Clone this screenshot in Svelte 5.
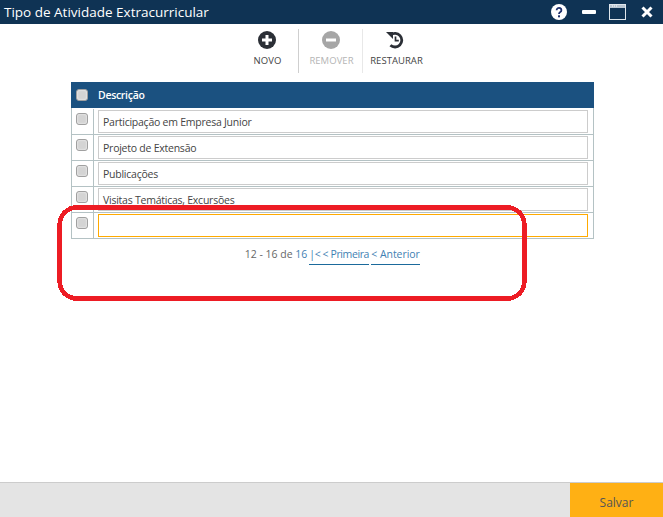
<script>
  const rows = [
    'Participação em Empresa Junior',
    'Projeto de Extensão',
    'Publicações',
    'Visitas Temáticas, Excursões',
    ''
  ];
</script>

<div class="window">
  <header class="titlebar">
    <span class="title">Tipo de Atividade Extracurricular</span>
    <div class="controls">
      <svg class="help" width="18" height="18" viewBox="0 0 18 18">
        <circle cx="9" cy="9" r="8" fill="#fff" />
        <path d="M6.6 7.2a2.4 2.3 0 1 1 3.7 1.9c-.9.6-1.3 1-1.3 2" fill="none" stroke="#1d2f6b" stroke-width="1.8" />
        <rect x="8" y="12.3" width="2" height="2" fill="#1d2f6b" />
      </svg>
      <svg class="min" width="14" height="18" viewBox="0 0 14 18"><rect x="0" y="7" width="14" height="4" rx="1" fill="#fff" /></svg>
      <svg class="max" width="17" height="16" viewBox="0 0 17 16">
        <rect x=".5" y=".5" width="16" height="15" fill="none" stroke="#dfe6ec" />
        <rect x="1" y="1" width="15" height="3" fill="#b9c6d2" />
        <path d="M3 2h1M5 2h1M7 2h1" stroke="#fff" />
      </svg>
      <svg class="close" width="12" height="18" viewBox="0 0 12 18"><path d="M1.5 4.5l9 9M10.5 4.5l-9 9" stroke="#fff" stroke-width="3" /></svg>
    </div>
  </header>

  <nav class="toolbar">
    <div class="tool">
      <svg width="18" height="18" viewBox="0 0 18 18">
        <circle cx="9" cy="9" r="9" fill="#2b2f36" />
        <path d="M9 4v10M4 9h10" stroke="#fff" stroke-width="3" />
      </svg>
      <span>NOVO</span>
    </div>
    <div class="tool disabled">
      <svg width="18" height="18" viewBox="0 0 18 18">
        <circle cx="9" cy="9" r="9" fill="#a6a6a6" />
        <path d="M4 9h10" stroke="#fff" stroke-width="3" />
      </svg>
      <span>REMOVER</span>
    </div>
    <div class="tool">
      <svg width="18" height="18" viewBox="0 0 18 18">
        <path d="M4.6 4A6.800 6.800 0 1 1 4.400 14.200" fill="none" stroke="#2b2f36" stroke-width="2.800" />
        <path d="M0 1h7v7z" fill="#2b2f36" />
        <path d="M9.500 5.500v4.200h3.300" fill="none" stroke="#2b2f36" stroke-width="1.700" />
      </svg>
      <span>RESTAURAR</span>
    </div>
  </nav>

  <main class="content">
    <div class="grid">
      <div class="grid-head">
        <div class="cell-check"><span class="box"></span></div>
        <div class="head-label">Descrição</div>
      </div>
      {#each rows as row, i}
        <div class="grid-row">
          <div class="cell-check"><span class="box"></span></div>
          <div class="cell-input">
            <div class="input" class:focus={i === rows.length - 1}>{row}</div>
          </div>
        </div>
      {/each}
    </div>

    <div class="pager">
      <span>12 - 16 de <b>16</b></span>
      <a href="#first">|&lt; &lt; Primeira</a>
      <a href="#prev">&lt; Anterior</a>
    </div>
  </main>

  <footer class="footer">
    <button class="save">Salvar</button>
  </footer>

  <svg class="mark" width="663" height="517" viewBox="0 0 663 517">
    <rect x="59.7" y="207.5" width="464.6" height="91" rx="17" fill="none" stroke="#ed1c24" stroke-width="4.7" shape-rendering="crispEdges" />
  </svg>
</div>

<style>
  :global(body) {
    margin: 0;
    background: #fff;
  }

  .window {
    position: relative;
    width: 663px;
    height: 517px;
    display: flex;
    flex-direction: column;
    overflow: hidden;
    font-family: "Open Sans", sans-serif;
    color: #444;
  }

  .titlebar {
    height: 24px;
    flex: none;
    display: flex;
    align-items: center;
    justify-content: space-between;
    background: #0f3354;
    color: #fff;
  }

  .title {
    padding-left: 4px;
    font-size: 13.5px;
  }

  .controls {
    display: flex;
    align-items: center;
    padding-right: 10px;
  }

  .help { margin-right: 14px; }
  .min { margin-right: 13px; }
  .max { margin-right: 15px; }

  .toolbar {
    flex: none;
    height: 48px;
    margin-top: 5px;
    display: flex;
    align-items: flex-start;
    justify-content: center;
    padding-right: 3px;
  }

  .tool {
    width: 64px;
    height: 44px;
    box-sizing: border-box;
    display: flex;
    flex-direction: column;
    align-items: center;
    padding-top: 2px;
    gap: 5px;
    font-size: 9.5px;
    letter-spacing: 0.05px;
    color: #444;
    border-left: 1px solid #cfcfcf;
  }

  .tool span { margin-left: 2px; }
  .tool:first-child { border-left: none; padding-left: 1px; }
  .tool:last-child { border-left-color: #e8e8e8; }
  .tool:last-child span { margin-left: 4px; }
  .tool.disabled { color: #b5b5b5; }

  .content {
    flex: 1;
    padding: 5px 69px 0 71px;
  }

  .grid {
    border: solid #b4c2c4;
    border-width: 0 1px 1px 1px;
  }

  .grid-head {
    height: 26px;
    margin: 0 -1px;
    display: flex;
    align-items: center;
    background: #1b5180;
    color: #fff;
  }

  .head-label {
    padding-left: 4px;
    font-size: 10.5px;
    font-weight: 600;
    letter-spacing: -0.3px;
  }

  .grid-row {
    height: 25px;
    display: flex;
    border-top: 1px solid #b4c2c4;
  }

  .grid-head + .grid-row {
    border-top-color: #fff;
  }

  .cell-check {
    width: 22px;
    flex: none;
    padding: 4px 0 0 4px;
    display: flex;
    align-items: flex-start;
    box-sizing: border-box;
    border-right: 1px solid #b4c2c4;
  }

  .grid-head .cell-check {
    width: 23px;
    padding: 0 0 0 5px;
    align-items: center;
    border-right: none;
  }

  .box {
    width: 12px;
    height: 12px;
    box-sizing: border-box;
    border: 1px solid #a0a0a0;
    border-radius: 3px;
    background: #d4d4d4;
    box-shadow: inset 0 0 2px #fff;
  }

  .cell-input {
    flex: 1;
    padding: 1px 5px 0 4px;
  }

  .input {
    height: 23px;
    box-sizing: border-box;
    border: 1px solid #ccc;
    padding-left: 4px;
    line-height: 23px;
    font-size: 10.5px;
    letter-spacing: -0.24px;
    color: #444;
  }

  .input.focus {
    border-color: #ffaa00;
  }

  .pager {
    margin-top: 8px;
    display: flex;
    justify-content: center;
    font-size: 10.5px;
    color: #666;
  }

  .pager b {
    font-weight: 400;
    color: #3f7fb3;
  }

  .pager a {
    margin-left: 2px;
    color: #3f7fb3;
    text-decoration: none;
    border-bottom: 1px solid #1b6a9c;
    padding-bottom: 3px;
  }

  .pager a:first-of-type {
    width: 60px;
    white-space: nowrap;
    letter-spacing: -0.4px;
  }

  .pager a:last-of-type {
    width: 49px;
    white-space: nowrap;
    letter-spacing: -0.05px;
  }

  .footer {
    flex: none;
    height: 34px;
    display: flex;
    justify-content: flex-end;
    background: #e4e4e4;
    border-top: 1px solid #ccc;
  }

  .save {
    width: 93px;
    border: none;
    background: #ffb014;
    color: #555;
    font: 12px "Open Sans", sans-serif;
    padding: 5px 0 0;
  }

  .mark {
    position: absolute;
    left: 0;
    top: 0;
    pointer-events: none;
  }
</style>
